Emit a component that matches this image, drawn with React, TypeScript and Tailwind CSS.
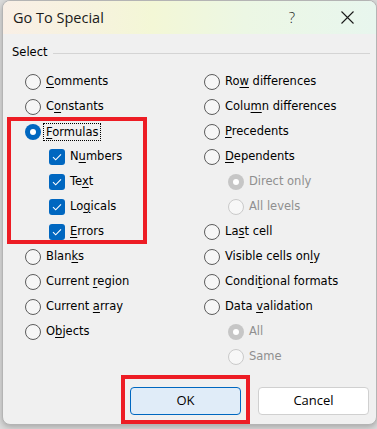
import React from 'react';

type Item = {
  label: string;
  key?: number; // index of underlined letter
  kind: 'radio' | 'check' | 'subradio';
  checked?: boolean;
  disabled?: boolean;
};

const leftItems: Item[] = [
  { label: 'Comments', key: 0, kind: 'radio' },
  { label: 'Constants', key: 1, kind: 'radio' },
  { label: 'Formulas', key: 0, kind: 'radio', checked: true },
  { label: 'Numbers', key: 1, kind: 'check', checked: true },
  { label: 'Text', key: 2, kind: 'check', checked: true },
  { label: 'Logicals', key: 2, kind: 'check', checked: true },
  { label: 'Errors', key: 0, kind: 'check', checked: true },
  { label: 'Blanks', key: 4, kind: 'radio' },
  { label: 'Current region', key: 8, kind: 'radio' },
  { label: 'Current array', key: 8, kind: 'radio' },
  { label: 'Objects', key: 1, kind: 'radio' },
];

const rightItems: Item[] = [
  { label: 'Row differences', key: 2, kind: 'radio' },
  { label: 'Column differences', key: 4, kind: 'radio' },
  { label: 'Precedents', key: 0, kind: 'radio' },
  { label: 'Dependents', key: 0, kind: 'radio' },
  { label: 'Direct only', kind: 'subradio', checked: true, disabled: true },
  { label: 'All levels', kind: 'subradio', disabled: true },
  { label: 'Last cell', key: 2, kind: 'radio' },
  { label: 'Visible cells only', key: 16, kind: 'radio' },
  { label: 'Conditional formats', key: 5, kind: 'radio' },
  { label: 'Data validation', key: 5, kind: 'radio' },
  { label: 'All', kind: 'subradio', checked: true, disabled: true },
  { label: 'Same', kind: 'subradio', disabled: true },
];

const Label = ({ text, k }: { text: string; k?: number }) => {
  if (k === undefined) return <>{text}</>;
  return (
    <>
      {text.slice(0, k)}
      <u className="underline-offset-2">{text[k]}</u>
      {text.slice(k + 1)}
    </>
  );
};

const Radio = ({ checked, disabled }: { checked?: boolean; disabled?: boolean }) => {
  if (checked && disabled)
    return (
      <span className="w-4 h-4 rounded-full bg-[#c6c6c6] flex items-center justify-center shrink-0">
        <span className="w-[6px] h-[6px] rounded-full bg-white" />
      </span>
    );
  if (checked)
    return (
      <span className="w-4 h-4 rounded-full bg-[#0067c0] flex items-center justify-center shrink-0">
        <span className="w-[6px] h-[6px] rounded-full bg-white" />
      </span>
    );
  if (disabled)
    return <span className="w-4 h-4 rounded-full border border-[#cacaca] bg-[#f7f7f7] shrink-0" />;
  return <span className="w-4 h-4 rounded-full border border-[#5c5c5c] bg-[#f6f6f6] shrink-0" />;
};

const Check = () => (
  <span className="w-4 h-4 rounded-[3px] bg-[#0067c0] flex items-center justify-center shrink-0">
    <svg width="10" height="8" viewBox="0 0 10 8" fill="none">
      <path d="M1 4.2 L3.7 6.8 L9 1.3" stroke="white" strokeWidth="1.1" />
    </svg>
  </span>
);

const Row = ({ item, sub }: { item: Item; sub: number }) => {
  const pad = item.kind === 'radio' ? 'pl-0' : sub === 0 ? 'pl-[24px]' : 'pl-[24px]';
  return (
    <div className={`h-[25px] flex items-center gap-[5px] ${pad}`}>
      {item.kind === 'check' ? <Check /> : <Radio checked={item.checked} disabled={item.disabled} />}
      <span
        className={`${item.disabled ? 'text-[#8f8f8f]' : 'text-black'} ${
          item.label === 'Formulas' ? 'outline-1 outline-dotted outline-black -ml-[2px] pl-[2px] pr-[1px] leading-[16px]' : ''
        } whitespace-nowrap`}
      >
        <Label text={item.label} k={item.key} />
      </span>
    </div>
  );
};

export default function App() {
  return (
    <div className="w-[377px] h-[429px] bg-[#dcdcdc] overflow-hidden font-['DejaVu_Sans',sans-serif]">
      <div className="relative ml-[2px] w-[375px] h-[425px] rounded-lg border border-[#b4b4b4] bg-[#f0f0f0] overflow-hidden shadow-[0_2px_6px_rgba(0,0,0,0.25)]">
        {/* title bar */}
        <div className="h-[33px] flex items-center pl-[10px] bg-[linear-gradient(90deg,#f9efe6_0%,#f6f3dd_25%,#f3f7d6_40%,#ecf7e4_65%,#e8f6ee_100%)] font-['Open_Sans',sans-serif]">
          <span className="text-[14.5px] text-[#1a1a1a] flex-1">Go To Special</span>
          <span className="text-[15px] text-[#1a1a1a] font-light mr-[46px]">?</span>
          <svg width="13" height="13" viewBox="0 0 13 13" className="mr-[22px]">
            <path d="M0.5 0.5 L12.5 12.5 M12.5 0.5 L0.5 12.5" stroke="#1a1a1a" strokeWidth="1.1" />
          </svg>
        </div>

        <div className="text-[11.5px]">
          {/* group header */}
          <div className="mt-[10px] h-[18px] flex items-center pl-[9px] pr-[6px] gap-[6px]">
            <span>Select</span>
            <div className="flex-1 h-px bg-[#d4d4d4]" />
          </div>

          {/* options */}
          <div className="mt-[7px] grid grid-cols-[179px_1fr] pl-[22px]">
            <div className="flex flex-col">
              {leftItems.map((it) => (
                <Row key={it.label} item={it} sub={0} />
              ))}
            </div>
            <div className="flex flex-col">
              {rightItems.map((it) => (
                <Row key={it.label} item={it} sub={1} />
              ))}
            </div>
          </div>

          {/* buttons */}
          <div className="mt-[18px] flex justify-end gap-[17px] pr-[7px] font-['Open_Sans',sans-serif] text-[13px]">
            <button className="w-[111px] h-[28px] rounded-[4px] border border-[#0067c0] bg-[#e0ecf8] text-black">
              OK
            </button>
            <button className="w-[111px] h-[28px] rounded-[4px] border border-[#d0d0d0] bg-white text-black">
              Cancel
            </button>
          </div>
        </div>

        {/* red annotation boxes */}
        <div className="absolute left-[4px] top-[116px] w-[140px] h-[127px] border-[4px] border-[#ed1c24] pointer-events-none" />
        <div className="absolute left-[118px] top-[374px] w-[129px] h-[49px] border-[4px] border-[#ed1c24] pointer-events-none" />
      </div>
    </div>
  );
}
